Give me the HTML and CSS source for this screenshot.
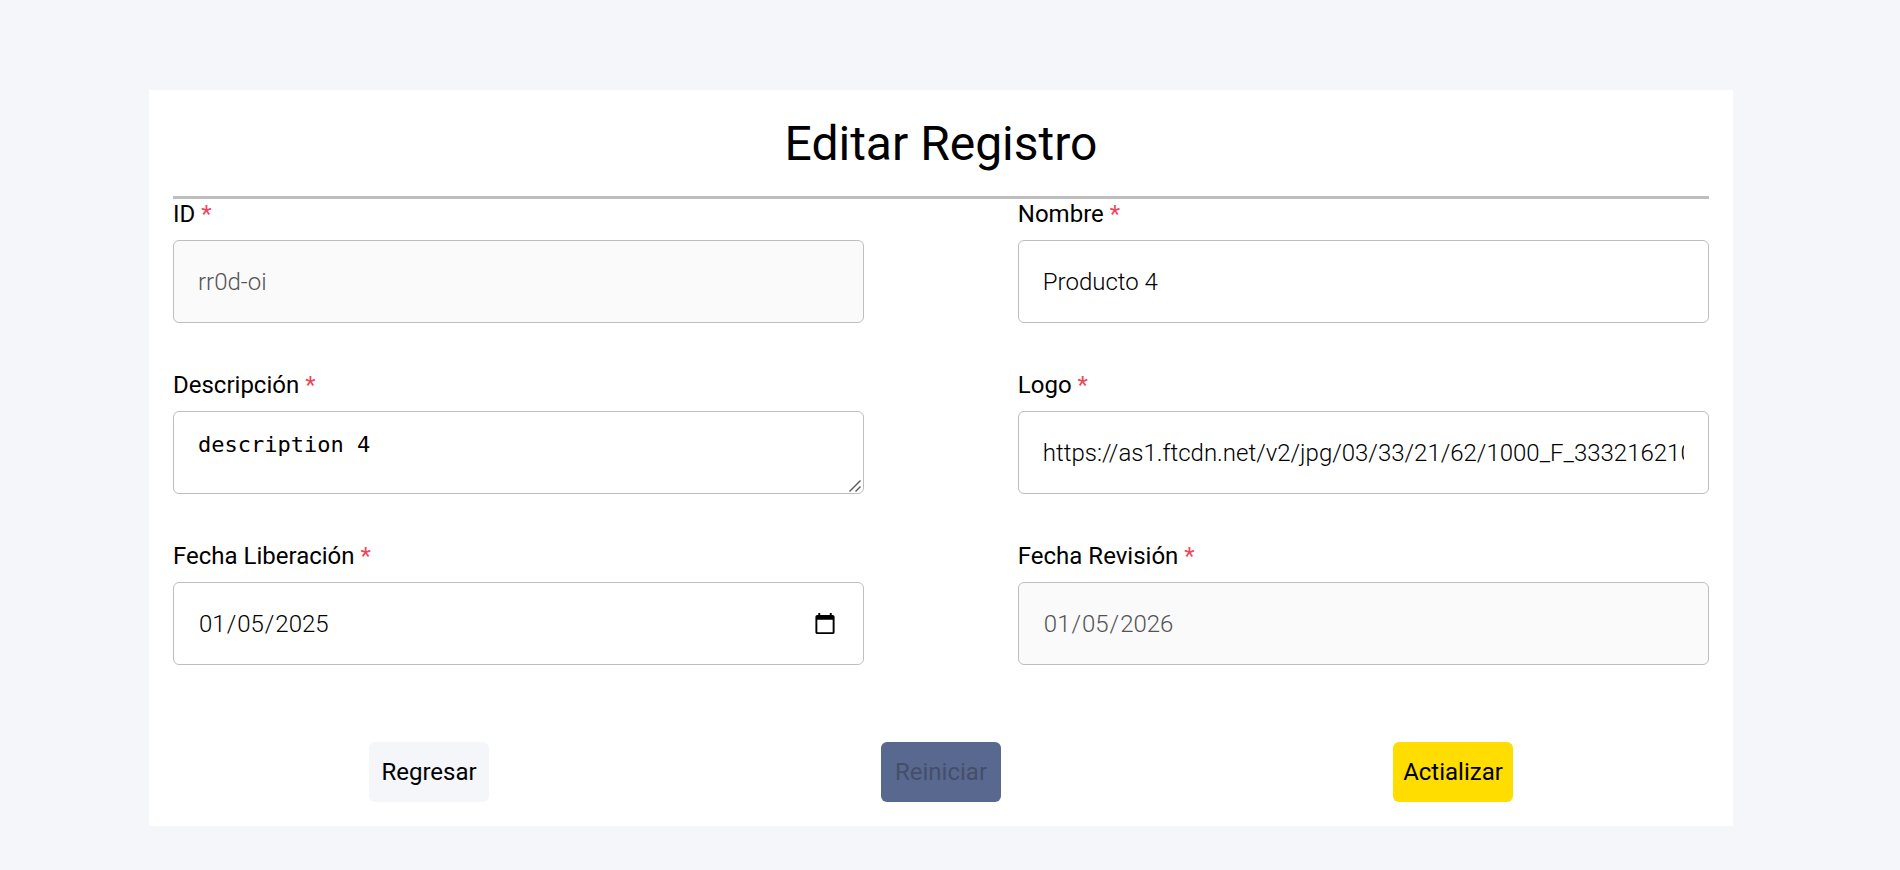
FILE: index.html
```
<!DOCTYPE html>
<html lang="es">
<head>
<meta charset="utf-8">
<meta name="viewport" content="width=device-width, initial-scale=1">
<title>Editar Registro</title>
<link rel="stylesheet" href="styles.css">
</head>
<body>
<main class="card">
  <h1 class="title">Editar Registro</h1>
  <form class="form">
    <div class="fields">
      <div class="field">
        <label class="label" for="id">ID <span class="required">*</span></label>
        <input class="control" id="id" type="text" value="rr0d-oi" disabled>
      </div>
      <div class="field">
        <label class="label" for="name">Nombre <span class="required">*</span></label>
        <input class="control" id="name" type="text" value="Producto 4">
      </div>
      <div class="field">
        <label class="label" for="description">Descripción <span class="required">*</span></label>
        <textarea class="control control-area" id="description">description 4</textarea>
      </div>
      <div class="field">
        <label class="label" for="logo">Logo <span class="required">*</span></label>
        <input class="control" id="logo" type="text" value="https://as1.ftcdn.net/v2/jpg/03/33/21/62/1000_F_333216210">
      </div>
      <div class="field">
        <label class="label" for="release">Fecha Liberación <span class="required">*</span></label>
        <input class="control" id="release" type="date" value="2025-01-05">
      </div>
      <div class="field">
        <label class="label" for="revision">Fecha Revisión <span class="required">*</span></label>
        <input class="control" id="revision" type="date" value="2026-01-05" disabled>
      </div>
    </div>
    <div class="actions">
      <button class="button button-back" type="button">Regresar</button>
      <button class="button button-reset" type="reset" disabled>Reiniciar</button>
      <button class="button button-submit" type="submit">Actializar</button>
    </div>
  </form>
</main>
</body>
</html>
```
FILE: styles.css
```
* {
  box-sizing: border-box;
}

body {
  margin: 0;
  padding: 90px 167px 44px 149px;
  background: #f4f6fa;
  color: #000;
  font-family: Roboto, "Liberation Sans", sans-serif;
  font-size: 24px;
}

.card {
  padding: 24px;
  background: #fff;
}

.title {
  margin: 0;
  padding-bottom: 22px;
  border-bottom: 3px solid #bebebe;
  font-size: 48px;
  font-weight: 400;
  line-height: 60px;
  text-align: center;
}

.fields {
  display: grid;
  grid-template-columns: 45% 45%;
  justify-content: space-between;
  row-gap: 47px;
}

.field {
  display: flex;
  flex-direction: column;
  gap: 11px;
}

.label {
  line-height: 30px;
}

.required {
  color: #f04459;
}

.control {
  width: 100%;
  height: 83px;
  margin: 0;
  padding: 0 24px;
  border: 1px solid #bebebe;
  border-radius: 6px;
  background: #fff;
  color: #000;
  font-family: inherit;
  font-size: 24px;
  font-weight: 300;
}

.control:disabled {
  background: #fafafa;
  color: #545454;
}

.control-area {
  padding: 20px 24px;
  font-family: "DejaVu Sans Mono", monospace;
  font-size: 22px;
  font-weight: 400;
}

.control-area::-webkit-resizer {
  background: url("data:image/svg+xml,%3Csvg xmlns='http://www.w3.org/2000/svg' width='15' height='15' viewBox='0 0 15 15'%3E%3Cpath d='M1.5 13.5l11-11M7.5 13.5l5-5' fill='none' stroke='%23555' stroke-width='1.4'/%3E%3C/svg%3E") no-repeat right bottom;
}

.actions {
  display: grid;
  grid-template-columns: repeat(3, 1fr);
  justify-items: center;
  margin-top: 77px;
}

.button {
  min-width: 120px;
  height: 60px;
  padding: 0 6px;
  border: 0;
  border-radius: 6px;
  color: #000;
  font-family: inherit;
  font-size: 24px;
}

.button-back {
  background: #f4f6fa;
}

.button-reset {
  background: #59688e;
  color: #434f6a;
}

.button-submit {
  background: #ffdd00;
}
```
